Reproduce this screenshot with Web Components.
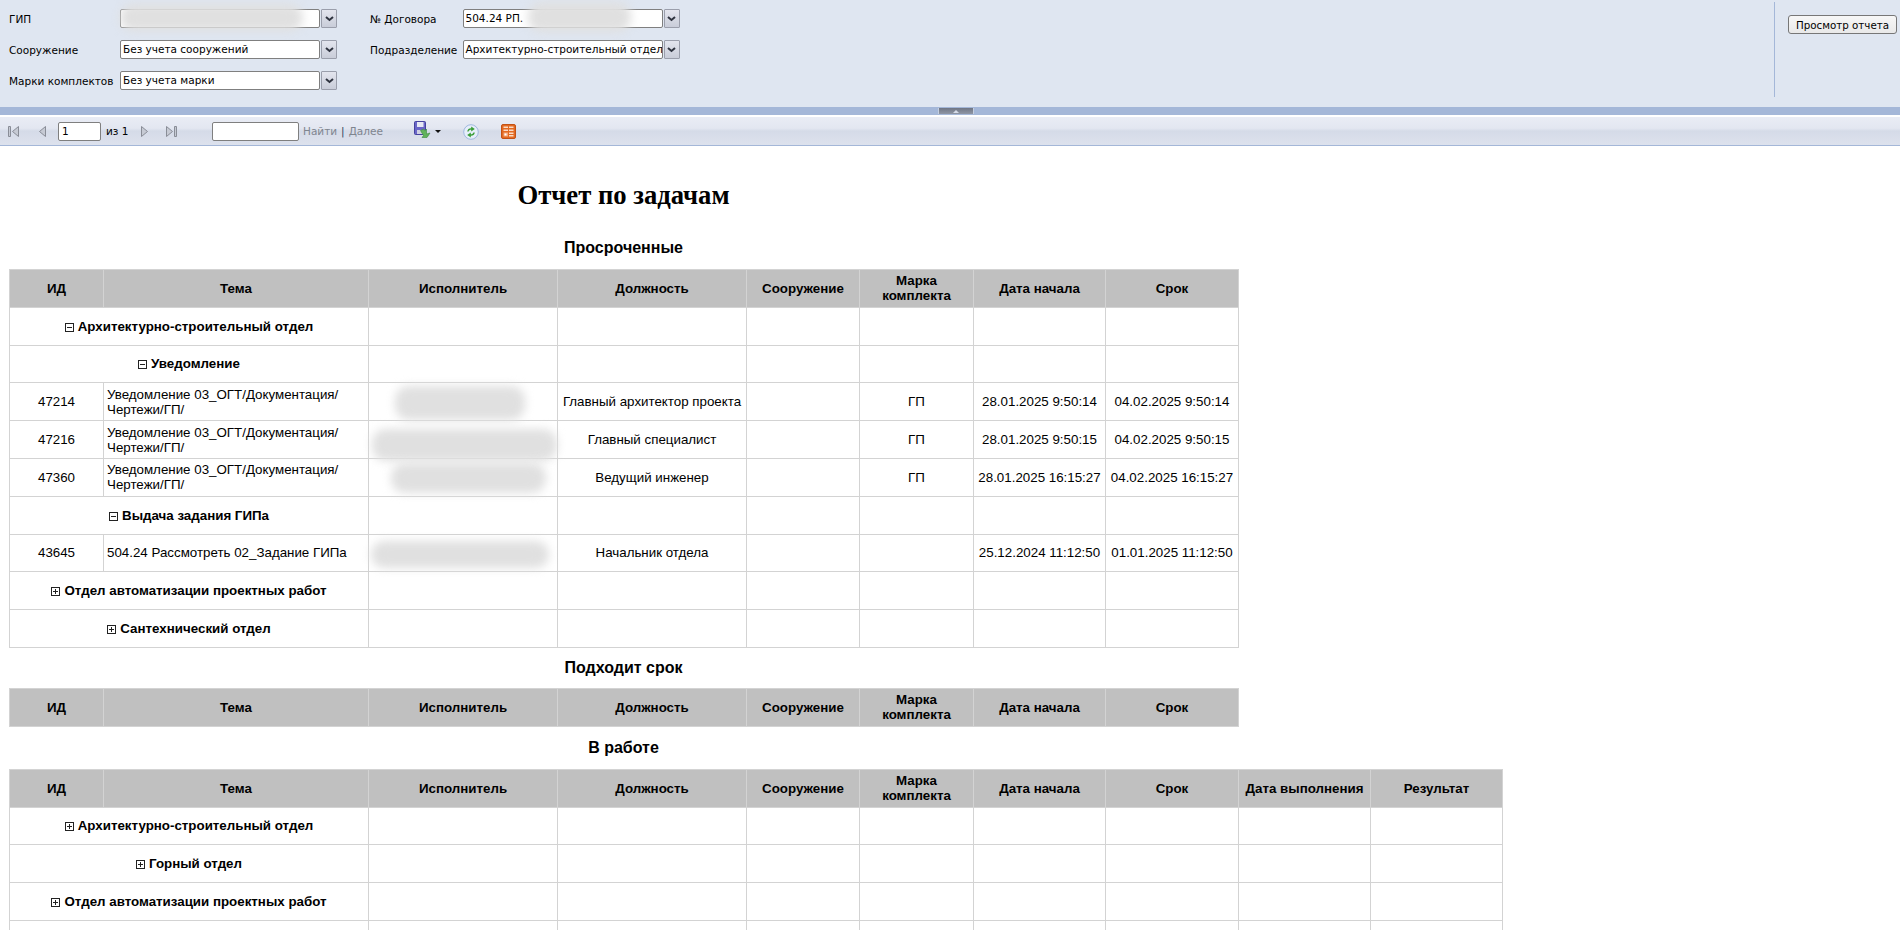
<!DOCTYPE html>
<html lang="ru"><head><meta charset="utf-8"><title>Отчет по задачам</title>
<style>
html,body{margin:0;padding:0;height:930px;overflow:hidden;background:#fff;font-family:"Liberation Sans",Arial,sans-serif}
rv-viewer{display:block;height:930px;overflow:hidden}
</style></head><body>
<rv-viewer></rv-viewer>
<script>
const BLOB=(s)=>`<i class="blob" style="${s}"></i>`;
const BLOBCSS=`.blob{position:absolute;display:block;background:#e0e0e0;border-radius:14px;filter:blur(5px);pointer-events:none}`;

class RvCombo extends HTMLElement{
  connectedCallback(){
    const s=this.attachShadow({mode:'open'});
    s.innerHTML=`<style>
    :host{display:flex;gap:1px;position:relative;height:19px;width:217px;font:10.500px "DejaVu Sans",Verdana,sans-serif;color:#000}
    .box{flex:none;box-sizing:border-box;width:200px;height:19px;border:1px solid #7f7f7f;border-radius:2px;background:#fff;line-height:17px;padding:0 0 0 2px;white-space:nowrap;overflow:hidden}
    .btn{flex:none;box-sizing:border-box;width:16px;height:19px;border:1px solid #9a9eab;border-radius:1px;background:linear-gradient(#e3e5ee,#c9cdd9);display:flex;align-items:center;justify-content:center}
    </style><div class="box"><slot></slot></div><div class="btn"><svg width="9" height="6" viewBox="0 0 9 6"><path d="M1 1l3.500 3 3.500-3" fill="none" stroke="#2f3440" stroke-width="2"/></svg></div>`;
  }
}
customElements.define('rv-combo',RvCombo);

class RvParams extends HTMLElement{
  connectedCallback(){
    const s=this.attachShadow({mode:'open'});
    s.innerHTML=`<style>
    :host{display:flex;height:107px;background:#dfe6f1;box-sizing:border-box;font:10.500px "DejaVu Sans",Verdana,sans-serif;color:#000;position:relative}
    .grid{display:grid;grid-template-columns:111px 250px 92.500px 217px;grid-auto-rows:19px;row-gap:12px;align-items:center;padding:9px 0 0 9px;flex:1;align-content:start}
    .blobwrap{position:relative}
    ${BLOBCSS}
    .side{margin:2px 0 10px;border-left:1px solid #a4b7d8;padding:13px 0 0 13px;width:112px}
    button{display:block;box-sizing:border-box;width:109px;height:19px;border:1px solid #777;border-radius:3px;background:linear-gradient(#f7f7f7,#e9e9e9);font:10.300px "DejaVu Sans",Verdana,sans-serif;color:#000;padding:0}
    </style>
    <div class="grid">
      <div>ГИП</div><div class="blobwrap"><rv-combo>&nbsp;</rv-combo>${BLOB('left:0;top:-5px;width:183px;height:27px')}</div>
      <div>№ Договора</div><div class="blobwrap"><rv-combo>504.24 РП.</rv-combo>${BLOB('left:65px;top:-7px;width:103px;height:30px')}</div>
      <div>Сооружение</div><rv-combo>Без учета сооружений</rv-combo>
      <div>Подразделение</div><rv-combo>Архитектурно-строительный отдел</rv-combo>
      <div>Марки комплектов</div><rv-combo>Без учета марки</rv-combo>
    </div>
    <div class="side"><button>Просмотр отчета</button></div>`;
  }
}
customElements.define('rv-params',RvParams);

class RvSplitter extends HTMLElement{
  connectedCallback(){
    const s=this.attachShadow({mode:'open'});
    s.innerHTML=`<style>
    :host{display:flex;height:8px;background:#a4b7d8;box-sizing:border-box;padding:1px 0 0 938px}
    .h{box-sizing:border-box;width:36px;height:6px;background:linear-gradient(#6f7684,#8f97a6);border-left:1px solid #c5cfe0;border-right:1px solid #c5cfe0;display:flex;justify-content:center;align-items:center}
    .h i{display:block;width:0;height:0;border:3px solid transparent;border-top:0;border-bottom:3px solid #d5dbe8}
    </style><div class="h"><i></i></div>`;
  }
}
customElements.define('rv-splitter',RvSplitter);

class RvToolbar extends HTMLElement{
  connectedCallback(){
    const s=this.attachShadow({mode:'open'});
    const F='#c6cad4',S='#898d97';
    s.innerHTML=`<style>
    :host{display:flex;align-items:center;height:31px;box-sizing:border-box;border-top:2px solid #fff;border-bottom:1px solid #a4b7d8;padding-left:8px;background:linear-gradient(#e9ecf5 0%,#e3e7f1 40%,#d5dbe8 50%,#dde2ed 100%);font:10.500px "DejaVu Sans",Verdana,sans-serif;color:#000}
    svg{display:block;flex:none}
    input{box-sizing:border-box;height:19px;border:1px solid #7f7f7f;border-radius:2px;background:#fff;font:10.500px "DejaVu Sans",Verdana,sans-serif;padding:0 3px;margin:0;outline:0}
    .dim{color:#7f858f}
    .t{white-space:nowrap}
    .find{display:flex;width:81px;margin-left:4px}
    </style>
    <svg width="11" height="11" viewBox="0 0 11 11" style="margin-right:20px"><path d="M.5.5h2v10h-2z M10.500.5v10l-6-5z" fill="${F}" stroke="${S}"/></svg>
    <svg width="7" height="11" viewBox="0 0 7 11" style="margin-right:12px"><path d="M6.500.5v10l-6-5z" fill="${F}" stroke="${S}"/></svg>
    <input value="1" style="width:43px">
    <span class="t" style="margin-left:5px;width:35px">из 1</span>
    <svg width="7" height="11" viewBox="0 0 7 11" style="margin-right:18px"><path d="M.5.5v10l6-5z" fill="${F}" stroke="${S}"/></svg>
    <svg width="11" height="11" viewBox="0 0 11 11" style="margin-right:35px"><path d="M8.500.5h2v10h-2z M.5.5v10l6-5z" fill="${F}" stroke="${S}"/></svg>
    <input style="width:87px">
    <div class="find"><span class="t dim">Найти</span><span class="t" style="color:#33415c;margin:0 4px">|</span><span class="t dim">Далее</span></div>
    <svg width="17" height="17" viewBox="0 0 17 17" style="margin-left:30px;margin-top:-3px">
      <rect x="0.500" y="0.500" width="11" height="13" rx="1" fill="#6a66c8" stroke="#45429e"/>
      <rect x="3" y="1" width="6.500" height="5" fill="#e6e8f4"/><rect x="3" y="9" width="6" height="4" fill="#cfd0e2"/>
      <path d="M6.500 9.500l3-1.500 1.500 1.500 1.500-1.500v5l3.500-1-3 4.500h-5l1.500-2z" fill="#62b35c" stroke="#3b8a3d" stroke-width=".6"/>
    </svg>
    <svg width="6" height="3" viewBox="0 0 6 3" style="margin-left:4px"><path d="M0 0h6L3 3z" fill="#111"/></svg>
    <svg width="16" height="16" viewBox="0 0 16 16" style="margin-left:22px;margin-top:2px">
      <circle cx="8" cy="8" r="7.300" fill="#e6eefa" stroke="#a0b8df"/>
      <path d="M4.200 7.500c.3-2.300 2-3.500 4-3.300V2.600L11.800 5 8.200 7.400V5.800C7 5.700 5.900 6.300 5.600 7.600z" fill="#3a9e38"/>
      <path d="M11.800 8.500c-.3 2.300-2 3.500-4 3.300v1.600L4.200 11l3.600-2.400v1.600c1.200.1 2.300-.5 2.600-1.800z" fill="#3a9e38"/>
    </svg>
    <svg width="15" height="15" viewBox="0 0 15 15" style="margin-left:22px">
      <rect x="0.500" y="0.500" width="14" height="14" rx="1.500" fill="#e36a22" stroke="#c25216"/>
      <path d="M2.500 2.500h4.500v1.500H2.500zM2.500 5.500h4.500v1.500H2.500zM8 2.500h4.500v1.500H8zM8 5.500h4.500v1.500H8zM8 8.500h4.500v1.500H8zM8 11h4.500v1.500H8z" fill="#fbdcc6"/>
      <rect x="2.500" y="8.500" width="4.500" height="4" fill="#f6a878"/><rect x="3.500" y="9.500" width="2" height="2" fill="#fff"/>
    </svg>`;
  }
}
customElements.define('rv-toolbar',RvToolbar);

class RvExpander extends HTMLElement{
  connectedCallback(){
    const open=this.hasAttribute('open');
    const s=this.attachShadow({mode:'open'});
    s.innerHTML=`<style>:host{display:inline-block;width:9px;height:9px;margin-right:4px;vertical-align:-1px}svg{display:block}</style>
    <svg width="9" height="9" viewBox="0 0 9 9"><rect x=".5" y=".5" width="8" height="8" fill="#fff" stroke="#222"/><path d="M2 4.500h5${open?'':'M4.500 2v5'}" stroke="#222"/></svg>`;
  }
}
customElements.define('rv-expander',RvExpander);

class RvTitle extends HTMLElement{
  connectedCallback(){
    const s=this.attachShadow({mode:'open'});
    s.innerHTML=`<style>:host{display:block;width:1229px;text-align:center;font:bold 16px/20px "Liberation Sans",Arial,sans-serif;color:#000}</style><slot></slot>`;
  }
}
customElements.define('rv-title',RvTitle);

const H8=['ИД','Тема','Исполнитель','Должность','Сооружение','Марка<br>комплекта','Дата начала','Срок'];
const W8=[94,265,189,189,113,114,132,133];
class RvTable extends HTMLElement{
  connectedCallback(){
    const wide=this.hasAttribute('wide');
    const heads=wide?[...H8,'Дата выполнения','Результат']:H8;
    const widths=wide?[...W8,132,132]:W8;
    const rows=JSON.parse(this.dataset.rows||'[]');
    const s=this.attachShadow({mode:'open'});
    const blank=(n)=>'<td></td>'.repeat(n);
    const body=rows.map(r=>{
      if(r.blank) return `<tr><td colspan="2"></td>${blank(heads.length-2)}</tr>`;
      if(r.g) return `<tr><td colspan="2" class="g"><rv-expander ${r.open?'open':''}></rv-expander>${r.g}</td>${blank(heads.length-2)}</tr>`;
      const blob=r.b?BLOB(r.b):'';
      return `<tr><td>${r.id}</td><td class="l">${r.t}</td><td class="rel">${blob}</td><td>${r.p}</td><td></td><td>${r.m||''}</td><td>${r.d1}</td><td>${r.d2}</td></tr>`;
    }).join('');
    s.innerHTML=`<style>
    :host{display:block;font:13.330px/15px "Liberation Sans",Arial,sans-serif;color:#000}
    table{border-collapse:collapse;table-layout:fixed;width:${widths.reduce((a,b)=>a+b,0)}px}
    th,td{border:1px solid #d3d3d3;padding:0 2px;text-align:center;height:37.800px;box-sizing:border-box;font-size:13.330px;line-height:15px}
    th{background:#c0c0c0;font-weight:bold}
    td.g{font-weight:bold}
    td.l{text-align:left;padding-left:3px}
    td.rel{position:relative}
    ${BLOBCSS}
    </style><table><colgroup>${widths.map(w=>`<col style="width:${w}px">`).join('')}</colgroup>
    <thead><tr>${heads.map(h=>`<th>${h}</th>`).join('')}</tr></thead><tbody>${body}</tbody></table>`;
  }
}
customElements.define('rv-table',RvTable);

class RvReport extends HTMLElement{
  connectedCallback(){
    const s=this.attachShadow({mode:'open'});
    const T='Уведомление 03_ОГТ/Документация/ Чертежи/ГП/';
    const a=[{g:'Архитектурно-строительный отдел',open:1},{g:'Уведомление',open:1},
      {id:47214,t:T,p:'Главный архитектор проекта',m:'ГП',d1:'28.01.2025 9:50:14',d2:'04.02.2025 9:50:14',b:'left:26px;top:3px;width:130px;height:34px'},
      {id:47216,t:T,p:'Главный специалист',m:'ГП',d1:'28.01.2025 9:50:15',d2:'04.02.2025 9:50:15',b:'left:3px;top:8px;width:185px;height:32px'},
      {id:47360,t:T,p:'Ведущий инженер',m:'ГП',d1:'28.01.2025 16:15:27',d2:'04.02.2025 16:15:27',b:'left:22px;top:4px;width:155px;height:30px'},
      {g:'Выдача задания ГИПа',open:1},
      {id:43645,t:'504.24 Рассмотреть 02_Задание ГИПа',p:'Начальник отдела',d1:'25.12.2024 11:12:50',d2:'01.01.2025 11:12:50',b:'left:2px;top:6px;width:178px;height:27px'},
      {g:'Отдел автоматизации проектных работ'},{g:'Сантехнический отдел'}];
    const c=[{g:'Архитектурно-строительный отдел'},{g:'Горный отдел'},{g:'Отдел автоматизации проектных работ'},{blank:1}];
    s.innerHTML=`<style>
    :host{display:block;padding:0 0 0 9px;height:784px;overflow:hidden}
    h1{margin:0;width:1229px;text-align:center;font:bold 26.670px/30px "Liberation Serif","Times New Roman",serif;padding-top:34px;padding-bottom:28px}
    </style>
    <h1>Отчет по задачам</h1>
    <rv-title style="padding-bottom:11px">Просроченные</rv-title>
    <rv-table data-rows='${JSON.stringify(a)}'></rv-table>
    <rv-title style="padding:10px 0 10px">Подходит срок</rv-title>
    <rv-table></rv-table>
    <rv-title style="padding:11px 0 11px">В работе</rv-title>
    <rv-table wide data-rows='${JSON.stringify(c)}'></rv-table>`;
  }
}
customElements.define('rv-report',RvReport);

class RvViewer extends HTMLElement{
  connectedCallback(){
    const s=this.attachShadow({mode:'open'});
    s.innerHTML=`<style>:host{display:block;height:930px;overflow:hidden}</style>
    <rv-params></rv-params><rv-splitter></rv-splitter><rv-toolbar></rv-toolbar><rv-report></rv-report>`;
  }
}
customElements.define('rv-viewer',RvViewer);
</script>
</body></html>
